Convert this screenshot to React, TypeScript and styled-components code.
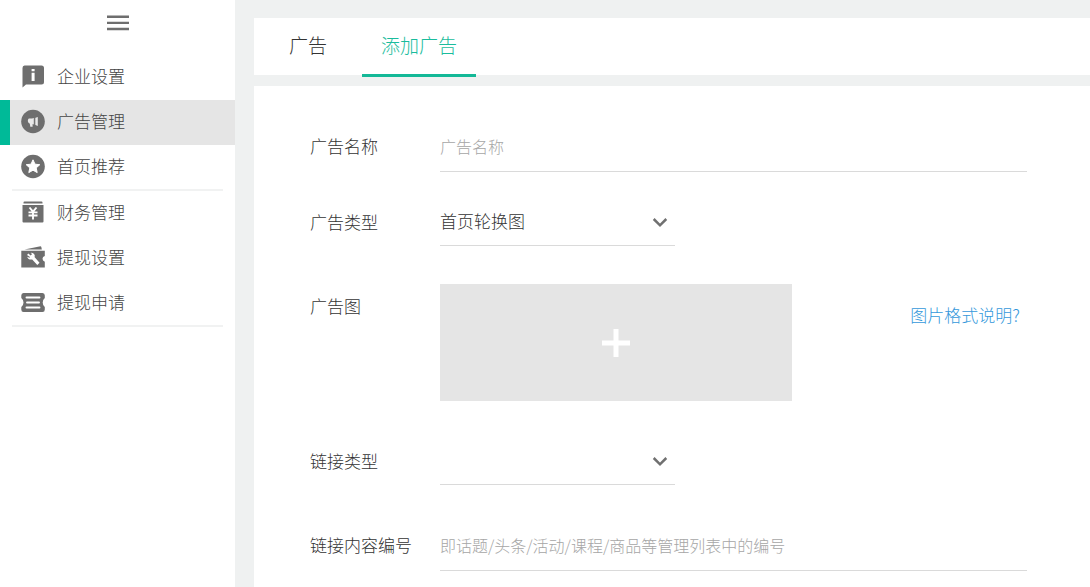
import React, { useState } from "react";
import styled, { createGlobalStyle } from "styled-components";

const GlobalStyle = createGlobalStyle`
  *, *::before, *::after { box-sizing: border-box; }
  body {
    margin: 0;
    background: #eff1f1;
    color: #333;
    font-family: "Noto Sans CJK SC", "Liberation Sans", sans-serif;
    font-size: 17px;
    font-weight: 300;
  }
  button, input, select { font: inherit; color: inherit; }
`;

const Page = styled.div`
  display: flex;
  min-height: 100vh;
`;

const Sidebar = styled.aside`
  flex: 0 0 235px;
  background: #fff;
`;

const MenuToggle = styled.button`
  display: flex;
  align-items: center;
  justify-content: center;
  width: 100%;
  height: 45px;
  margin-bottom: 10px;
  padding: 0;
  border: 0;
  background: none;
  cursor: pointer;
`;

const NavLink = styled.a<{ $active?: boolean }>`
  display: flex;
  align-items: center;
  gap: 11px;
  height: 45px;
  padding: 0 10px 4px;
  border-left: 10px solid ${(p) => (p.$active ? "#00ba98" : "transparent")};
  background: ${(p) => (p.$active ? "#e5e5e5" : "transparent")};
  color: #444;
  text-decoration: none;
`;

const Divider = styled.hr`
  height: 2px;
  margin: -1px 12px 0;
  border: 0;
  background: #f1f2f2;
`;

const Main = styled.main`
  flex: 1;
  display: flex;
  flex-direction: column;
  gap: 11px;
  min-width: 0;
  padding: 18px 0 0 19px;
`;

const Tabs = styled.nav`
  display: flex;
  gap: 16px;
  height: 57px;
  padding-left: 16px;
  background: #fff;
`;

const Tab = styled.button<{ $active?: boolean }>`
  height: 59px;
  padding: 0 19px 4px;
  border: 0;
  border-bottom: 3px solid ${(p) => (p.$active ? "#14b897" : "transparent")};
  background: none;
  color: ${(p) => (p.$active ? "#1abc9c" : "#333")};
  font-size: 19px;
  cursor: pointer;
`;

const Form = styled.form`
  flex: 1;
  padding: 38px 63px 16px 56px;
  background: #fff;
`;

const Row = styled.div<{ $space?: number }>`
  display: flex;
  align-items: flex-start;
  margin-bottom: ${(p) => p.$space ?? 38}px;
`;

const Label = styled.label`
  flex: 0 0 130px;
  line-height: 44px;
`;

const TextInput = styled.input`
  flex: 1;
  min-width: 0;
  height: 48px;
  padding: 0 0 4px;
  border: 0;
  border-bottom: 1px solid #dadada;
  background: none;
  outline: none;
  font-size: 16px;

  &::placeholder {
    color: #a6a6a6;
    opacity: 1;
  }
`;

const SelectBox = styled.div`
  position: relative;
  width: 235px;

  svg {
    position: absolute;
    top: 16px;
    right: 7px;
    pointer-events: none;
  }
`;

const Select = styled.select`
  appearance: none;
  width: 100%;
  height: 46px;
  padding: 0 28px 4px 0;
  border: 0;
  border-bottom: 1px solid #dadada;
  border-radius: 0;
  background: none;
  outline: none;
`;

const UploadButton = styled.button`
  display: flex;
  align-items: center;
  justify-content: center;
  flex: 0 1 352px;
  height: 117px;
  padding: 0;
  border: 0;
  background: #e5e5e5;
  cursor: pointer;
`;

const HelpLink = styled.a`
  margin: 19px 7px 0 auto;
  color: #3498db;
  line-height: 24px;
  text-decoration: none;
`;

const NavIcon = ({ children }: { children: React.ReactNode }) => (
  <svg width="26" height="26" viewBox="0 0 26 26" fill="#6e6e6e" aria-hidden="true">
    {children}
  </svg>
);

const InfoIcon = () => (
  <NavIcon>
    <path d="M4.500 2.500H21.500Q24 2.500 24 5V19Q24 21.500 21.500 21.500H6L2.500 24.500V5Q2.500 2.500 4.500 2.500Z" />
    <path fill="#fff" d="M11.600 6h3v2.300h-3zM11.600 9.800h3V18h-3z" />
  </NavIcon>
);

const MegaphoneIcon = () => (
  <NavIcon>
    <circle cx="13" cy="13.500" r="11.800" />
    <path
      fill="#e9e9e9"
      d="M8.800 10.600H12L13.800 10V16.600L12.600 16.100V18.800H10.300L9.800 15.700Q7.800 15 7.800 13.100T8.800 10.600ZM14.800 10L17.800 9V17.900L14.800 16.800Z"
    />
    <path fill="#6e6e6e" d="M14.300 9h1v8.500h-1z" />
  </NavIcon>
);

const StarIcon = () => (
  <NavIcon>
    <circle cx="13" cy="13.500" r="11.800" />
    <path
      fill="#fff"
      stroke="#fff"
      strokeLinejoin="round"
      d="M13 6.800L15 11.200L19.800 11.700L16.200 14.900L17.200 19.600L13 17.200L8.800 19.600L9.800 14.900L6.200 11.700L11 11.200Z"
    />
  </NavIcon>
);

const FinanceIcon = () => (
  <NavIcon>
    <path d="M4.500 2.500H21.500Q22.500 2.500 22.500 3.500V4.500H3.500V3.500Q3.500 2.500 4.500 2.500ZM2.500 6H23.500V22.500Q23.500 23.500 22.500 23.500H3.500Q2.500 23.500 2.500 22.500Z" />
    <path
      fill="none"
      stroke="#fff"
      strokeWidth="1.900"
      d="M9.500 8.500L13 12.700L16.500 8.500M8.500 13.400H17.500M8.500 16.500H17.500M13 12.500V20.500"
    />
  </NavIcon>
);

const WalletToolIcon = () => (
  <NavIcon>
    <path d="M4.500 5.600L20.500 2.200Q21.500 2.200 21.800 5.600ZM1.300 6.800H24.800V12Q22.500 12.700 22.500 14.800T24.800 17.800V23.500H1.300Z" />
    <path
      fill="#fff"
      d="M8.400 9.500L10.600 11.500L12.200 10L10.600 8.900Q13.200 8.400 14.400 10.500Q15.100 12 14.500 13.100L19.500 18.700L17.300 20.900L12.200 15.500Q8.200 16 7.200 12.700L9.500 13.700L10 13L7 10.900Z"
    />
  </NavIcon>
);

const TicketIcon = () => (
  <NavIcon>
    <path d="M3.500 4H22.500Q24.800 4 24.800 6.500V9Q22.700 10.500 22.700 13.500T24.800 18V20.500Q24.800 23 22.500 23H3.500Q1.300 23 1.300 20.500V18Q3.500 16.500 3.500 13.500T1.300 9V6.500Q1.300 4 3.500 4Z" />
    <path
      fill="none"
      stroke="#fff"
      strokeWidth="1.900"
      strokeLinecap="round"
      d="M6.500 8.500H19.500M7 13.500H19M6.500 18.500H19.500"
    />
  </NavIcon>
);

const Chevron = () => (
  <svg width="16" height="13" viewBox="0 0 16 13" aria-hidden="true">
    <path d="M1.700 3L8 9.300L14.300 3" fill="none" stroke="#707070" strokeWidth="2.500" />
  </svg>
);

const groups = [
  [
    { text: "企业设置", Icon: InfoIcon },
    { text: "广告管理", Icon: MegaphoneIcon },
    { text: "首页推荐", Icon: StarIcon },
  ],
  [
    { text: "财务管理", Icon: FinanceIcon },
    { text: "提现设置", Icon: WalletToolIcon },
    { text: "提现申请", Icon: TicketIcon },
  ],
];

export default function App() {
  const [current, setCurrent] = useState("广告管理");
  const [tab, setTab] = useState("添加广告");

  return (
    <Page>
      <GlobalStyle />
      <Sidebar>
        <MenuToggle type="button" aria-label="菜单">
          <svg width="22" height="16" viewBox="0 0 22 16" fill="#6e6e6e" aria-hidden="true">
            <path d="M0 0.500h22v2.400H0zM0 6.700h22v2.400H0zM0 12.800h22v2.400H0z" />
          </svg>
        </MenuToggle>
        <nav>
          {groups.map((items, i) => (
            <React.Fragment key={i}>
              {items.map(({ text, Icon }) => (
                <NavLink key={text} href="#" $active={text === current} onClick={() => setCurrent(text)}>
                  <Icon />
                  {text}
                </NavLink>
              ))}
              <Divider />
            </React.Fragment>
          ))}
        </nav>
      </Sidebar>
      <Main>
        <Tabs>
          {["广告", "添加广告"].map((text) => (
            <Tab key={text} type="button" $active={text === tab} onClick={() => setTab(text)}>
              {text}
            </Tab>
          ))}
        </Tabs>
        <Form>
          <Row $space={28}>
            <Label htmlFor="name">广告名称</Label>
            <TextInput id="name" placeholder="广告名称" />
          </Row>
          <Row>
            <Label htmlFor="type">广告类型</Label>
            <SelectBox>
              <Select id="type">
                <option>首页轮换图</option>
              </Select>
              <Chevron />
            </SelectBox>
          </Row>
          <Row>
            <Label htmlFor="image">广告图</Label>
            <UploadButton id="image" type="button">
              <svg width="28" height="28" viewBox="0 0 28 28" aria-hidden="true">
                <path d="M14 0V28M0 14H28" stroke="#fff" strokeWidth="5" />
              </svg>
            </UploadButton>
            <HelpLink href="#">图片格式说明?</HelpLink>
          </Row>
          <Row>
            <Label htmlFor="linkType">链接类型</Label>
            <SelectBox>
              <Select id="linkType" />
              <Chevron />
            </SelectBox>
          </Row>
          <Row $space={0}>
            <Label htmlFor="linkId">链接内容编号</Label>
            <TextInput id="linkId" placeholder="即话题/头条/活动/课程/商品等管理列表中的编号" />
          </Row>
        </Form>
      </Main>
    </Page>
  );
}
